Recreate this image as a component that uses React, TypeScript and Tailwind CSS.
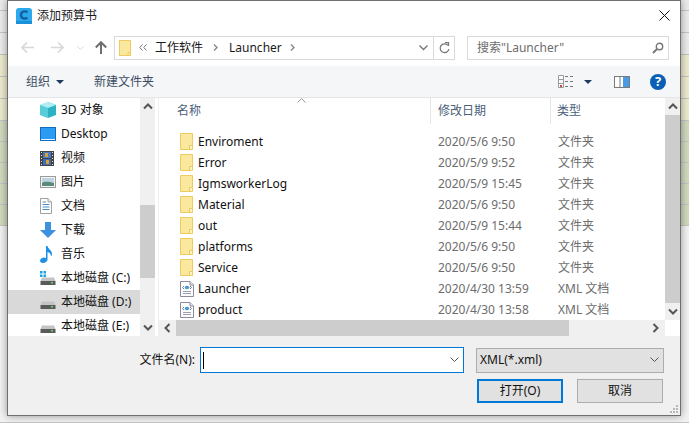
import React from 'react';

const font = "font-['Noto_Sans','Noto_Sans_CJK_SC',sans-serif]";

const FolderIcon = () => (
  <svg width="13" height="17" viewBox="0 0 13 17" className="shrink-0">
    <path d="M0.5 0.5H12.5V16.5H0.5Z" fill="#fbe89f" stroke="#eecb5f" />
    <path d="M9.5 16.5V12.5H12.5" fill="none" stroke="#eecb5f" />
    <path d="M10 13H12V16H10Z" fill="#fff3c4" />
  </svg>
);

const XmlIcon = () => (
  <svg width="14" height="16" viewBox="0 0 14 16" className="shrink-0">
    <path d="M0.5 0.5H10L13.5 4V15.5H0.5Z" fill="#fdfdfd" stroke="#8c8c9c" />
    <path d="M10 0.5V4H13.5" fill="#e4e4ea" stroke="#8c8c9c" />
    <ellipse cx="7" cy="6.5" rx="2.2" ry="1.8" fill="#3f9bd0" />
    <path d="M4 5L2.5 6.5L4 8M10 5L11.5 6.5L10 8" fill="none" stroke="#777" />
    <path d="M3 10.5H11M3 12.5H11" stroke="#a0a0b0" />
  </svg>
);

const Cube = () => (
  <svg width="16" height="16" viewBox="0 0 16 16">
    <path d="M8 0L16 3V13L8 16Z" fill="#2bb3c4" />
    <path d="M8 0L0 3V13L8 16Z" fill="#7fe0e6" />
    <path d="M8 0L16 3L8 6L0 3Z" fill="#aef0f2" />
    <path d="M8 6V16L0 13V3Z" fill="#56cdd9" />
  </svg>
);

const DesktopIcon = () => (
  <svg width="16" height="14" viewBox="0 0 16 14">
    <rect width="16" height="14" fill="#0f6cc0" />
    <path d="M1 1H15V12H1Z" fill="#2a9bf0" />
    <path d="M1 12H15V13H1Z" fill="#e8f4ff" />
  </svg>
);

const VideoIcon = () => (
  <svg width="14" height="15" viewBox="0 0 14 15">
    <rect width="14" height="15" fill="#444" />
    <path d="M1 1H2V2H1ZM1 4H2V5H1ZM1 7H2V8H1ZM1 10H2V11H1ZM1 13H2V14H1ZM12 1H13V2H12ZM12 4H13V5H12ZM12 7H13V8H12ZM12 10H13V11H12ZM12 13H13V14H12Z" fill="#ddd" />
    <rect x="3" y="1" width="8" height="6" fill="#4a78c8" />
    <rect x="3" y="8" width="8" height="6" fill="#3f6bb8" />
    <path d="M5 2H8V6H5ZM6 9H9V13H6Z" fill="#d6a32d" />
  </svg>
);

const PictureIcon = () => (
  <svg width="16" height="12" viewBox="0 0 16 12">
    <rect x="0.5" y="0.5" width="15" height="11" fill="#f4f4f4" stroke="#9a9a9a" />
    <rect x="2" y="2" width="12" height="8" fill="#bcd3e2" />
    <path d="M2 7C5 5 9 6 14 7V10H2Z" fill="#5b8a78" />
  </svg>
);

const DocIcon = () => (
  <svg width="12" height="16" viewBox="0 0 12 16">
    <path d="M0.5 0.5H8L11.5 4V15.5H0.5Z" fill="#fff" stroke="#a0a0a0" />
    <path d="M8 0.5V4H11.5" fill="#e8e8e8" stroke="#a0a0a0" />
    <path d="M2.5 4H6M2.5 6.5H9.5M2.5 9H9.5M2.5 11.5H9.5" stroke="#4d8fc4" />
  </svg>
);

const DownloadIcon = () => (
  <svg width="16" height="16" viewBox="0 0 16 16">
    <path d="M5 0H11V8H16L8 16L0 8H5Z" fill="#3d8fe0" />
  </svg>
);

const MusicIcon = () => (
  <svg width="13" height="17" viewBox="0 0 13 17">
    <path d="M6 0H7.5C8 3 12 4 12 8C12 9 11.5 10 11 10.5C11 8 9.5 6.5 7.5 6V13.5C7.5 15.5 5 17 2.8 17C1 17 0 16 0 14.8C0 13 2.2 11.5 4 11.5C4.8 11.5 5.5 11.7 6 12Z" fill="#1e90e8" />
  </svg>
);

const DriveIcon = ({ windows }: { windows?: boolean }) => (
  <svg width="16" height="14" viewBox="0 0 16 14">
    {windows && <path d="M0 0H2.5V2.5H0ZM3.5 0H6V2.5H3.5ZM0 3.5H2.5V6H0ZM3.5 3.5H6V6H3.5Z" fill="#19a3e8" />}
    <path d="M2 6.5H14L15.5 10H0.5Z" fill="#c4c4c4" />
    <rect x="0.5" y="10" width="15" height="4" fill="#5a5a5a" />
    <rect x="11" y="11" width="2" height="1.5" fill="#5fe05f" />
  </svg>
);

const Chevron = ({ dir, color = '#555' }: { dir: 'up' | 'down' | 'left' | 'right'; color?: string }) => {
  const d = {
    up: 'M1 6.5L5 2.5L9 6.5',
    down: 'M1 2.5L5 6.5L9 2.5',
    left: 'M6.5 1L2.5 5L6.5 9',
    right: 'M2.5 1L6.5 5L2.5 9',
  }[dir];
  return (
    <svg width="10" height="10" viewBox="0 0 10 10">
      <path d={d} fill="none" stroke={color} strokeWidth="2" />
    </svg>
  );
};

const TinyChevron = () => (
  <svg width="9" height="6" viewBox="0 0 9 6">
    <path d="M0.5 0.5L4.5 4.5L8.5 0.5" fill="none" stroke="#555" />
  </svg>
);

const DropCaret = () => (
  <svg width="8" height="4" viewBox="0 0 8 4">
    <path d="M0 0H8L4 4Z" fill="#1f3a5f" />
  </svg>
);

const AppLogo = () => (
  <svg width="16" height="16" viewBox="0 0 16 16">
    <rect width="16" height="16" rx="3" fill="#2ba9ec" />
    <rect y="13" width="16" height="3" fill="#1b8fd8" />
    <path d="M11.5 4.2C9 2.6 5 3.5 5 7.2C5 10.6 9 11.2 11.5 9.8" fill="none" stroke="#14609f" strokeWidth="2.4" />
  </svg>
);

const bgRows = [
  { h: 'h-[11px]', c: 'bg-[#ececec]' },
  { h: 'h-[22px]', c: 'bg-[#ececec]' },
  { h: 'h-[22px]', c: 'bg-[#ececec]' },
  { h: 'h-[22px]', c: 'bg-[#ecebcf]' },
  { h: 'h-[22px]', c: 'bg-[#ecebcf]' },
  { h: 'h-[22px]', c: 'bg-[#ecebcf]' },
  { h: 'h-[21px]', c: 'bg-[#cfdabd]' },
  { h: 'h-[21px]', c: 'bg-[#cfdabd]' },
  { h: 'h-[21px]', c: 'bg-[#cfdabd]' },
  { h: 'h-[21px]', c: 'bg-[#cfdabd]' },
  { h: 'h-[21px]', c: 'bg-[#cfdabd]' },
  { h: 'h-[197px]', c: 'bg-[#f2f2f2]' },
];

const navItems = [
  { label: '3D 对象', icon: <Cube /> },
  { label: 'Desktop', icon: <DesktopIcon /> },
  { label: '视频', icon: <VideoIcon /> },
  { label: '图片', icon: <PictureIcon /> },
  { label: '文档', icon: <DocIcon /> },
  { label: '下载', icon: <DownloadIcon /> },
  { label: '音乐', icon: <MusicIcon /> },
  { label: '本地磁盘 (C:)', icon: <DriveIcon windows /> },
  { label: '本地磁盘 (D:)', icon: <DriveIcon />, selected: true },
  { label: '本地磁盘 (E:)', icon: <DriveIcon /> },
];

const files = [
  { name: 'Enviroment', date: '2020/5/6 9:50', type: '文件夹' },
  { name: 'Error', date: '2020/5/9 9:52', type: '文件夹' },
  { name: 'IgmsworkerLog', date: '2020/5/9 15:45', type: '文件夹' },
  { name: 'Material', date: '2020/5/6 9:50', type: '文件夹' },
  { name: 'out', date: '2020/5/9 15:44', type: '文件夹' },
  { name: 'platforms', date: '2020/5/6 9:50', type: '文件夹' },
  { name: 'Service', date: '2020/5/6 9:50', type: '文件夹' },
  { name: 'Launcher', date: '2020/4/30 13:59', type: 'XML 文档', xml: true },
  { name: 'product', date: '2020/4/30 13:58', type: 'XML 文档', xml: true },
];

export default function App() {
  return (
    <div className={`relative w-[689px] h-[423px] overflow-hidden text-[12px] leading-none text-[#1a1a1a] ${font}`}>
      {bgRows.map((r, i) => (
        <div key={i} className={`${r.h} ${r.c} border-b border-[#c4c4c4]`} />
      ))}

      {/* dialog */}
      <div className="absolute left-[7px] top-0 w-[674px] h-[416px] flex flex-col border border-[#6f6f6f] bg-white shadow-[0_0_8px_rgba(0,0,0,0.4)]">
        {/* title */}
        <div className="h-[29px] shrink-0 flex items-center pl-[8px] pr-[10px]">
          <AppLogo />
          <span className="ml-[5px]">添加预算书</span>
          <svg width="11" height="11" viewBox="0 0 11 11" className="ml-auto">
            <path d="M0.5 0.5L10.5 10.5M10.5 0.5L0.5 10.5" stroke="#111" />
          </svg>
        </div>

        {/* address row */}
        <div className="h-[36px] shrink-0 flex items-center pl-[13px] pb-[1px]">
          <svg width="13" height="11" viewBox="0 0 13 11">
            <path d="M6 0.5L1 5.5L6 10.5M1 5.5H13" fill="none" stroke="#d8d8d8" strokeWidth="1.6" />
          </svg>
          <svg width="13" height="11" viewBox="0 0 13 11" className="ml-[17px]">
            <path d="M7 0.5L12 5.5L7 10.5M0 5.5H12" fill="none" stroke="#d8d8d8" strokeWidth="1.6" />
          </svg>
          <svg width="7" height="4" viewBox="0 0 7 4" className="ml-[13px]">
            <path d="M0.5 0.5L3.5 3.5L6.5 0.5" fill="none" stroke="#d8d8d8" />
          </svg>
          <svg width="12" height="13" viewBox="0 0 12 13" className="ml-[11px]">
            <path d="M6 13V1.5M0.8 6.5L6 1.2L11.2 6.5" fill="none" stroke="#6e6e6e" strokeWidth="2" />
          </svg>
          <div className="ml-[7px] w-[341px] h-[24px] flex items-center border border-[#d9d9d9]">
            <div className="ml-[4px] flex">
              <svg width="12" height="16" viewBox="0 0 12 16">
                <path d="M0.5 0.5H11.5V15.5H0.5Z" fill="#fbe89f" stroke="#eecb5f" />
                <path d="M9 15.5V12.5H11.5" fill="none" stroke="#eecb5f" />
              </svg>
            </div>
            <span className="ml-[8px] flex">
              <svg width="8" height="7" viewBox="0 0 8 7">
                <path d="M3.5 0.5L0.8 3.5L3.5 6.5M7.5 0.5L4.8 3.5L7.5 6.5" fill="none" stroke="#777" />
              </svg>
            </span>
            <span className="ml-[8px]">工作软件</span>
            <span className="ml-[10px] flex"><svg width="5" height="7" viewBox="0 0 5 7"><path d="M1 0.5L4 3.5L1 6.5" fill="none" stroke="#888" strokeWidth="1.4" /></svg></span>
            <span className="ml-[11px]">Launcher</span>
            <span className="ml-[8px] flex"><svg width="5" height="7" viewBox="0 0 5 7"><path d="M1 0.5L4 3.5L1 6.5" fill="none" stroke="#888" strokeWidth="1.4" /></svg></span>
            <span className="ml-auto mr-[5px] flex"><svg width="9" height="6" viewBox="0 0 9 6"><path d="M0.5 0.5L4.5 4.5L8.5 0.5" fill="none" stroke="#777" strokeWidth="1.4" /></svg></span>
            <div className="w-[21px] h-full border-l border-[#d9d9d9] flex items-center justify-center">
              <svg width="11" height="12" viewBox="0 0 11 12">
                <path d="M8.8 3.2A4.4 4.4 0 1 0 9.9 7" fill="none" stroke="#777" strokeWidth="1.3" />
                <path d="M6 0.5H9.5V4" fill="none" stroke="#777" strokeWidth="1.3" />
              </svg>
            </div>
          </div>
          <div className="ml-[12px] w-[202px] h-[24px] flex items-center pl-[9px] pr-[4px] border border-[#d9d9d9] text-[#6d6d6d]">
            <span>搜索"Launcher"</span>
            <svg width="12" height="12" viewBox="0 0 12 12" className="ml-auto">
              <circle cx="7.5" cy="4.5" r="3.2" fill="none" stroke="#777" strokeWidth="1.4" />
              <path d="M5 7L1 11" stroke="#777" strokeWidth="2" />
            </svg>
          </div>
        </div>

        {/* command bar */}
        <div className="h-[32px] shrink-0 flex items-center pl-[18px] pr-[14px] bg-[#f5f6f7] border-b border-[#e5e5e5] text-[#3c4d63]">
          <span>组织</span>
          <span className="ml-[6px] flex"><DropCaret /></span>
          <span className="ml-[30px]">新建文件夹</span>
          <svg width="16" height="13" viewBox="0 0 16 13" className="ml-auto">
            <path d="M0.5 0.5H5.5V12.5H0.5Z" fill="#fff" stroke="#9a9a9a" />
            <path d="M0.5 4.5H5.5M0.5 8.5H5.5" stroke="#9a9a9a" />
            <path d="M7 1.5H10M12 1.5H15M7 6.5H10M12 6.5H15M7 11.5H10M12 11.5H15" stroke="#777" />
            <rect x="2" y="10" width="2" height="2" fill="#d04040" />
          </svg>
          <span className="ml-[10px] flex"><DropCaret /></span>
          <svg width="16" height="12" viewBox="0 0 16 12" className="ml-[22px]">
            <rect x="0.5" y="0.5" width="15" height="11" fill="#fff" stroke="#7a7a7a" />
            <path d="M6 0.5V11.5" stroke="#7a7a7a" />
            <rect x="9" y="1" width="6" height="10" fill="#4a9be6" />
          </svg>
          <div className="ml-[20px] w-[16px] h-[16px] rounded-full bg-[#0a5fb4] flex items-center justify-center text-white text-[13px] font-bold">?</div>
        </div>

        {/* body */}
        <div className="h-[238px] shrink-0 flex">
          {/* nav pane */}
          <div className="w-[132px] shrink-0 overflow-hidden">
            {navItems.map((n) => (
              <div key={n.label} className={`h-[24px] flex items-center whitespace-nowrap ${n.selected ? 'bg-[#d9d9d9]' : ''}`}>
                <div className="w-[53px] shrink-0 pl-[32px] flex items-center">{n.icon}</div>
                <span className="text-[#111]">{n.label}</span>
              </div>
            ))}
          </div>

          {/* nav scrollbar */}
          <div className="w-[15px] shrink-0 bg-[#f0f0f0] flex flex-col">
            <div className="h-[17px] flex items-center justify-center"><Chevron dir="up" /></div>
            <div className="flex-1 pt-[90px] pb-[41px] flex">
              <div className="flex-1 bg-[#cdcdcd]" />
            </div>
            <div className="h-[17px] flex items-center justify-center"><Chevron dir="down" /></div>
          </div>
          <div className="w-[3px] shrink-0" />
          <div className="w-px shrink-0 bg-[#f0f0f0]" />

          {/* file list */}
          <div className="flex-1 min-w-0 flex flex-col">
            <div className="flex-1 min-h-0 flex">
              <div className="flex-1 min-w-0 flex flex-col overflow-hidden">
                <div className="relative h-[26px] shrink-0 flex text-[#4c607a]">
                  <div className="w-[271px] shrink-0 pl-[18px] flex items-center">名称</div>
                  <div className="w-[120px] shrink-0 pl-[7px] flex items-center border-l border-[#e5e5e5]">修改日期</div>
                  <div className="flex-1 pl-[6px] flex items-center border-l border-[#e5e5e5]">类型</div>
                  <svg width="9" height="5" viewBox="0 0 9 5" className="absolute left-[138px] top-0">
                    <path d="M0.5 4.5L4.5 0.5L8.5 4.5" fill="none" stroke="#999" />
                  </svg>
                </div>
                <div className="pt-[7px]">
                  {files.map((f) => (
                    <div key={f.name} className="h-[21px] flex items-center whitespace-nowrap">
                      <div className="w-[39px] shrink-0 pl-[21px] flex items-center">{f.xml ? <XmlIcon /> : <FolderIcon />}</div>
                      <span className="w-[240px] shrink-0 text-[#111]">{f.name}</span>
                      <span className="w-[120px] shrink-0 text-[#6d6d6d]">{f.date}</span>
                      <span className="text-[#6d6d6d]">{f.type}</span>
                    </div>
                  ))}
                </div>
              </div>
              <div className="w-[15px] shrink-0 bg-[#f0f0f0] flex flex-col">
                <div className="h-[17px] flex items-center justify-center"><Chevron dir="up" /></div>
                <div className="flex-1 bg-[#cdcdcd]" />
                <div className="h-[17px] flex items-center justify-center"><Chevron dir="down" /></div>
              </div>
            </div>
            <div className="h-[16px] shrink-0 flex">
              <div className="flex-1 bg-[#f0f0f0] flex">
                <div className="w-[17px] flex items-center justify-center"><Chevron dir="left" /></div>
                <div className="w-[393px] bg-[#cdcdcd]" />
                <div className="flex-1 flex items-center justify-end pr-[4px]"><Chevron dir="right" /></div>
              </div>
              <div className="w-[15px] shrink-0 bg-white" />
            </div>
          </div>
        </div>

        {/* footer */}
        <div className="relative flex-1 bg-[#f0f0f0] pt-[11px]">
          <div className="flex items-center">
            <span className="w-[192px] shrink-0 text-right pr-[5px] text-[#111]">文件名(N):</span>
            <div className="w-[264px] h-[26px] flex items-center bg-white border border-[#0078d7] pl-[2px] pr-[4px]">
              <div className="w-px h-[17px] bg-black" />
              <span className="ml-auto flex"><TinyChevron /></span>
            </div>
            <div className="ml-[12px] w-[188px] h-[25px] flex items-center bg-[#e1e1e1] border border-[#adadad] pl-[3px] pr-[4px] text-[#111]">
              <span>XML(*.xml)</span>
              <span className="ml-auto flex"><TinyChevron /></span>
            </div>
          </div>
          <div className="mt-[6px] flex pl-[469px] gap-[14px] text-[#111]">
            <div className="w-[86px] h-[24px] flex items-center justify-center bg-[#e1e1e1] border-2 border-[#0078d7]">打开(O)</div>
            <div className="w-[86px] h-[24px] flex items-center justify-center bg-[#e1e1e1] border border-[#adadad]">取消</div>
          </div>
          <svg width="9" height="9" viewBox="0 0 9 9" className="absolute right-px bottom-px">
            <path d="M6 0H8V2H6ZM3 3H5V5H3ZM6 3H8V5H6ZM0 6H2V8H0ZM3 6H5V8H3ZM6 6H8V8H6Z" fill="#b8b8b8" />
          </svg>
        </div>
      </div>
    </div>
  );
}
